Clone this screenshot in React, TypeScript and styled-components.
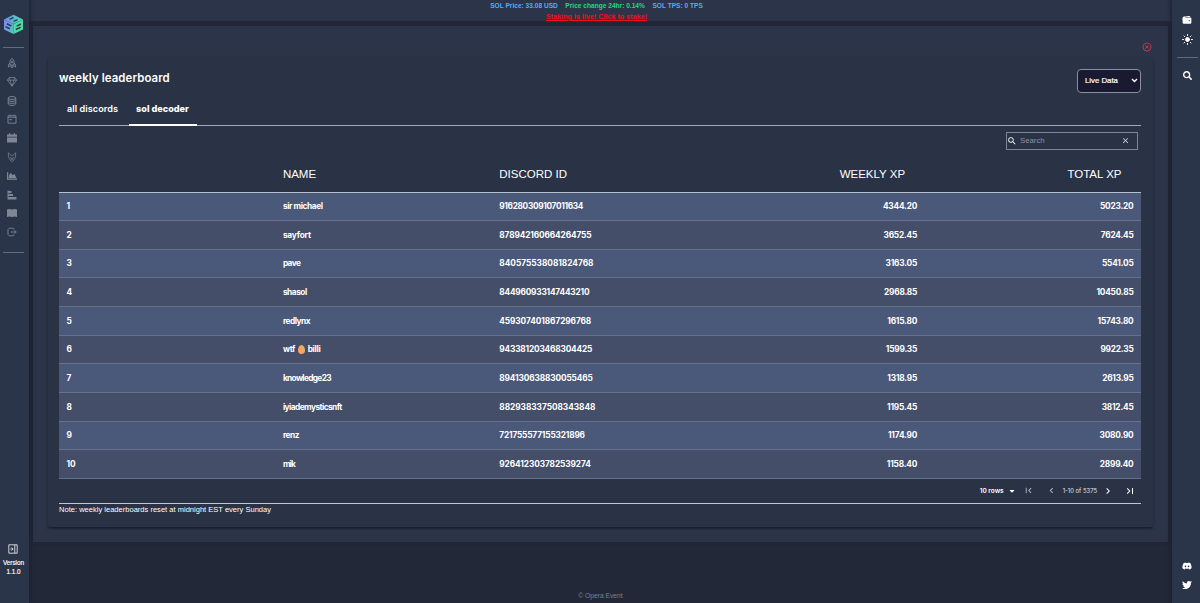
import React from "react";
import styled, { createGlobalStyle } from "styled-components";
import { IoWallet } from "react-icons/io5";
import { BsGem } from "react-icons/bs";
import { FaSearch, FaDiscord, FaTwitter, FaCaretDown, FaChartArea } from "react-icons/fa";
import { MdFirstPage, MdChevronLeft, MdChevronRight, MdLastPage, MdClose, MdSearch } from "react-icons/md";
import { AiOutlineCloseCircle } from "react-icons/ai";

const Global = createGlobalStyle`
  * { box-sizing: border-box; }
  body { margin: 0; background: #222838; color: #fff; font-family: "Liberation Sans", Arial, sans-serif; overflow: hidden; }
`;

const Page = styled.div`
  display: grid;
  grid-template-columns: 29px 1fr 28px;
  height: 603px;
`;

const Rail = styled.nav<{ $side: "left" | "right" }>`
  display: flex;
  flex-direction: column;
  align-items: center;
  background: #2b3549;
  z-index: 1;
  padding: ${(p) => (p.$side === "left" ? "14px 2px 27px 0" : "15px 0 13px 2px")};
  box-shadow: 0 0 4px 1px #191f30;
`;

const Rule = styled.hr<{ $top: number; $bottom: number }>`
  width: 21px;
  height: 1px;
  border: 0;
  background: #626b7e;
  flex: none;
  margin: ${(p) => p.$top}px 0 ${(p) => p.$bottom}px;
`;

const RailIcons = styled.div<{ $gap: number; $color: string; $shift?: number }>`
  display: flex;
  flex-direction: column;
  align-items: center;
  gap: ${(p) => p.$gap}px;
  margin-right: ${(p) => p.$shift ?? 0}px;
  color: ${(p) => p.$color};
  svg { display: block; }
`;

const Spacer = styled.div`
  flex: 1;
`;

const Version = styled.div`
  margin-top: 4px;
  font-size: 6.3px;
  line-height: 9px;
  text-align: center;
  width: 27px;
  -webkit-text-stroke: 0.15px #fff;
`;

const Main = styled.main`
  display: flex;
  flex-direction: column;
  min-width: 0;
`;

const Banner = styled.header`
  height: 21px;
  background: #2b3448;
  font-size: 6.6px;
  font-weight: 700;
  line-height: 11px;
  text-align: center;
  padding-right: 8px;
`;

const Ticker = styled.div`
  display: flex;
  justify-content: center;
  gap: 7.5px;
  color: #45b4f2;
`;

const Up = styled.span`
  color: #27d878;
`;

const Stake = styled.a`
  display: block;
  color: #f0101c;
  text-decoration: underline;
  font-size: 7.2px;
`;

const Content = styled.section`
  margin: 5px 4px 0;
  height: 516px;
  background: #2b3448;
  padding: 16px 15px 0;
  box-shadow: 0 0 3px #1d2333;
`;

const CloseRow = styled.div`
  display: flex;
  justify-content: flex-end;
  height: 16px;
  padding-right: 1px;
  color: #f0394f;
`;

const Card = styled.div`
  height: 469px;
  padding: 11px 12px 0 11px;
  background: #2a3246;
  border-radius: 2px;
  box-shadow: 0 2px 2px -1px #171c2b, 0 1px 3px rgba(20, 25, 40, 0.5);
`;

const TitleRow = styled.div`
  display: flex;
  justify-content: space-between;
  height: 30px;
`;

const Title = styled.h1`
  margin: 0;
  padding-top: 2px;
  font: 600 11.4px/14px Inter, sans-serif;
  letter-spacing: 0.1px;
`;

const Select = styled.button`
  width: 64px;
  height: 24px;
  display: flex;
  align-items: center;
  justify-content: space-between;
  padding: 0 2px 1px 7px;
  background: #1a1932;
  border: 1px solid #8791a3;
  border-radius: 4px;
  color: #fff;
  font: 7.8px "Liberation Sans", sans-serif;
  -webkit-text-stroke: 0.2px #fff;
`;

const Tabs = styled.div`
  display: flex;
  height: 27px;
  border-bottom: 1px solid #a0a9b8;
`;

const Tab = styled.div<{ $active?: boolean; $width: number }>`
  width: ${(p) => p.$width}px;
  height: 27px;
  padding-right: ${(p) => (p.$active ? 1 : 3)}px;
  text-align: center;
  font: ${(p) => (p.$active ? 800 : 600)} 9.1px/20px Inter, sans-serif;
  letter-spacing: ${(p) => (p.$active ? 0 : 0.07)}px;
  border-bottom: 2px solid ${(p) => (p.$active ? "#fff" : "transparent")};
`;

const Toolbar = styled.div`
  display: flex;
  justify-content: flex-end;
  padding: 6px 3px 0 0;
  height: 29px;
`;

const Search = styled.label`
  display: flex;
  align-items: center;
  width: 132px;
  height: 18px;
  border: 1px solid #7d8696;
  padding: 0 7px 1px 0;
  font-size: 7.8px;
  color: #8b93a2;
  svg:last-child { margin-left: auto; }
  span { margin-left: 3px; }
`;

const Table = styled.table`
  width: 100%;
  table-layout: fixed;
  border-collapse: collapse;
`;

const HeadCell = styled.th<{ $right?: boolean }>`
  height: 37px;
  padding: 1px ${(p) => (p.$right ? 19.5 : 8)}px 0 7.5px;
  border-bottom: 1px solid #b6bfce;
  text-align: ${(p) => (p.$right ? "right" : "left")};
  font: 11.5px "Liberation Sans", sans-serif;
`;

const Row = styled.tr`
  height: 28.65px;
  background: #444e69;
  &:nth-child(odd) { background: #4a587a; }
`;

const Cell = styled.td<{ $right?: boolean; $track?: number }>`
  padding: 0 7.5px 0.4px;
  border-bottom: 1px solid #667088;
  text-align: ${(p) => (p.$right ? "right" : "left")};
  font: 700 8.3px/12px Inter, sans-serif;
  letter-spacing: ${(p) => p.$track ?? 0}px;
  white-space: nowrap;
`;

const Egg = styled.span`
  display: inline-block;
  width: 7px;
  height: 9px;
  margin: 0 3px 0 2.5px;
  vertical-align: -1.5px;
  border-radius: 50% 50% 50% 50% / 58% 58% 42% 42%;
  background: #f3a764;
`;

const Pager = styled.div`
  display: flex;
  align-items: center;
  justify-content: flex-end;
  height: 25px;
  border-bottom: 1px solid #c3c6ce;
  font: 600 6.5px Inter, sans-serif;
  padding: 0 5px 0 0;
`;

const PageSize = styled.span`
  display: flex;
  align-items: center;
  gap: 4px;
  margin-right: 7px;
`;

const Step = styled.span<{ $gap: number; $dim?: boolean }>`
  display: flex;
  margin-right: ${(p) => p.$gap}px;
  color: ${(p) => (p.$dim ? "#b4bac5" : "#fff")};
`;

const Range = styled.span`
  margin-right: 5px;
  font-weight: 400;
  font-size: 5.9px;
  color: #e2e4e9;
`;

const Note = styled.p`
  margin: 0;
  font-size: 7.5px;
  line-height: 11px;
  letter-spacing: 0.02px;
`;

const Footer = styled.footer`
  margin-top: auto;
  height: 13px;
  text-align: center;
  font-size: 6.7px;
  line-height: 11px;
  color: #7c8290;
`;

const Logo = () => (
  <svg width="21" height="21" viewBox="0 0 21 21">
    <defs>
      <linearGradient id="cubeTop" x1="0" y1="0" x2="1" y2="0">
        <stop offset="0" stopColor="#6d8ff0" />
        <stop offset="1" stopColor="#4ae0b0" />
      </linearGradient>
      <linearGradient id="cubeLeft" x1="0" y1="0" x2="1" y2="1">
        <stop offset="0" stopColor="#8f78f2" />
        <stop offset="1" stopColor="#4ccfc0" />
      </linearGradient>
    </defs>
    <path d="M10.5 .8 20 5.4 10.5 10 1 5.4Z" fill="url(#cubeTop)" />
    <path d="M1 5.6 10.5 10.2V20L1 15.4Z" fill="url(#cubeLeft)" />
    <path d="M20 5.6 10.5 10.2V20L20 15.4Z" fill="#4ade9c" />
    <path d="M6.5 5.4 10.5 3.5M14.5 5.6 10.5 7.4" fill="none" stroke="#28405c" strokeWidth="1.5" />
    <path d="M8.4 12 3.8 9.8M7 14.8 2.6 12.8M18 10l-4.4 2.1M17.6 13.2 12.8 15.5" fill="none" stroke="#28405c" strokeWidth="1.5" />
  </svg>
);

const Line = styled.svg`
  width: 10px;
  height: 10px;
  fill: none;
  stroke: currentColor;
  stroke-width: 0.9;
  stroke-linejoin: round;
`;

const Solid = styled.svg`
  width: 10px;
  height: 10px;
  fill: currentColor;
`;

const Rocket = () => (
  <Line viewBox="0 0 10 10">
    <path d="M3 7V3.4Q3.3 1.4 5 .5 6.7 1.4 7 3.4V7ZM3 5 1.4 7v2L3 7.8M7 5l1.6 2v2L7 7.8M4 7v2.3h2V7" />
    <circle cx="5" cy="4" r=".8" />
  </Line>
);

const Database = () => (
  <Line viewBox="0 0 10 10">
    <ellipse cx="5" cy="2" rx="3.8" ry="1.5" />
    <path d="M1.2 2v6Q1.8 9.5 5 9.5T8.8 8V2M1.2 4.2Q2 5.4 5 5.4T8.8 4.2M1.2 6.2Q2 7.4 5 7.4T8.8 6.2" />
  </Line>
);

const CalendarOutline = () => (
  <Line viewBox="0 0 10 10">
    <path d="M1 1.8h8v7.4H1ZM1 3.2h8M3 .5v1.3M7 .5v1.3" />
    <path d="M2.6 5h2v1.2h-2z" fill="currentColor" stroke="none" />
  </Line>
);

const Calendar = () => (
  <Solid viewBox="0 0 10 10">
    <path d="M0 1.5h2V.3h1.4v1.2h3.2V.3H8v1.2h2v2.2H0ZM0 4.5h10v5H0Z" />
  </Solid>
);

const Wolf = () => (
  <Line viewBox="0 0 10 10">
    <path d="M1.3.8 4 3.3h2L8.7.8 8.5 5 6.3 8.8 5 9.5 3.7 8.8 1.5 5ZM3.2 5 4.2 6 5 8l.8-2 1-1" strokeWidth="0.7" />
  </Line>
);

const AreaFrame = styled(FaChartArea)`
  width: 10px;
  height: 10px;
`;

const Steps = () => (
  <Solid viewBox="0 0 10 10">
    <path d="M.5.5h1v9h-1zM1.5 1h3v2h-3zM1.5 4H6v2H1.5zM1.5 7h8v2.5h-8z" />
  </Solid>
);

const Book = () => (
  <Solid viewBox="0 0 10 10">
    <path d="M0 1.5Q2.5.6 5 1.5 7.5.6 10 1.5V9Q7.5 8.2 5 9 2.5 8.2 0 9Z" />
  </Solid>
);

const Leave = () => (
  <Line viewBox="0 0 10 10">
    <path d="M7 2.6V2Q6.8 1.2 6 1.2H2.2L1 2.4v5.2l1.2 1.2H6Q6.8 8.8 7 8V7.4M3.8 5h5.4M7.6 3.4 9.2 5 7.6 6.6" />
  </Line>
);

const ExpandPanel = () => (
  <Line viewBox="0 0 10 10">
    <path d="M.8.8h8.4v8.4H.8ZM6.8.8v8.4M2.4 5h2.4M3.6 3.4 5.2 5 3.6 6.6" />
  </Line>
);

const Sun = () => (
  <svg width="11" height="11" viewBox="0 0 10 10" stroke="#fff" strokeWidth="0.9" strokeLinecap="round">
    <circle cx="5" cy="5" r="1.8" fill="#fff" />
    <path d="M5 .5v.9M5 8.6v.9M.5 5h.9M8.6 5h.9M1.8 1.8l.6.6M7.6 7.6l.6.6M1.8 8.2l.6-.6M7.6 2.4l.6-.6" />
  </svg>
);

const Chevron = () => (
  <svg width="7" height="5" viewBox="0 0 7 5" fill="none" stroke="#fff" strokeWidth="1.4">
    <path d="m1 1 2.5 2.5L6 1" />
  </svg>
);

type Player = { name: React.ReactNode; track: number; id: string; idTrack: number; weekly: string; total: string };

const players: Player[] = [
  { name: "sir michael", track: -0.4, id: "916280309107011634", idTrack: -0.33, weekly: "4344.20", total: "5023.20" },
  { name: "sayfort", track: -0.2, id: "878942160664264755", idTrack: -0.12, weekly: "3652.45", total: "7624.45" },
  { name: "pave", track: -0.6, id: "840575538081824768", idTrack: 0, weekly: "3163.05", total: "5541.05" },
  { name: "shasol", track: -0.45, id: "844960933147443210", idTrack: -0.2, weekly: "2968.85", total: "10450.85" },
  { name: "redlynx", track: -0.5, id: "459307401867296768", idTrack: -0.08, weekly: "1615.80", total: "15743.80" },
  { name: <>wtf<Egg />billi</>, track: -0.3, id: "943381203468304425", idTrack: -0.17, weekly: "1599.35", total: "9922.35" },
  { name: "knowledge23", track: -0.65, id: "894130638830055465", idTrack: -0.12, weekly: "1318.95", total: "2613.95" },
  { name: "iyiademysticsnft", track: -0.55, id: "882938337508343848", idTrack: -0.03, weekly: "1195.45", total: "3812.45" },
  { name: "renz", track: -0.45, id: "721755577155321896", idTrack: -0.17, weekly: "1174.90", total: "3080.90" },
  { name: "mik", track: -0.9, id: "926412303782539274", idTrack: -0.08, weekly: "1158.40", total: "2899.40" },
];

export default function App() {
  return (
    <Page>
      <Global />
      <Rail $side="left">
        <Logo />
        <Rule $top={12} $bottom={10} />
        <RailIcons $gap={8.8} $color="#7f8797" $shift={3}>
          <Rocket />
          <BsGem size={10} />
          <Database />
          <CalendarOutline />
          <Calendar />
          <Wolf />
          <AreaFrame />
          <Steps />
          <Book />
          <Leave />
        </RailIcons>
        <Rule $top={14.5} $bottom={0} />
        <Spacer />
        <RailIcons $gap={0} $color="#dfe2e8" $shift={1}>
          <ExpandPanel />
        </RailIcons>
        <Version>Version<br />1.1.0</Version>
      </Rail>
      <Main>
        <Banner>
          <Ticker>
            <span>SOL Price: 33.08 USD</span>
            <Up>Price change 24hr: 0.14%</Up>
            <span>SOL TPS: 0 TPS</span>
          </Ticker>
          <Stake>Staking is live! Click to stake!</Stake>
        </Banner>
        <Content>
          <CloseRow><AiOutlineCloseCircle size={10} /></CloseRow>
          <Card>
            <TitleRow>
              <Title>weekly leaderboard</Title>
              <Select>Live Data<Chevron /></Select>
            </TitleRow>
            <Tabs>
              <Tab $width={70}>all discords</Tab>
              <Tab $width={68} $active>sol decoder</Tab>
            </Tabs>
            <Toolbar>
              <Search>
                <MdSearch size={10} color="#fff" />
                <span>Search</span>
                <MdClose size={9} color="#d5d9e0" />
              </Search>
            </Toolbar>
            <Table>
              <thead>
                <tr>
                  <HeadCell />
                  <HeadCell>NAME</HeadCell>
                  <HeadCell>DISCORD ID</HeadCell>
                  <HeadCell $right>WEEKLY XP</HeadCell>
                  <HeadCell $right>TOTAL XP</HeadCell>
                </tr>
              </thead>
              <tbody>
                {players.map((p, i) => (
                  <Row key={p.id}>
                    <Cell>{i + 1}</Cell>
                    <Cell $track={p.track}>{p.name}</Cell>
                    <Cell $track={p.idTrack}>{p.id}</Cell>
                    <Cell $right $track={-0.2}>{p.weekly}</Cell>
                    <Cell $right $track={-0.2}>{p.total}</Cell>
                  </Row>
                ))}
              </tbody>
            </Table>
            <Pager>
              <PageSize>10 rows<FaCaretDown size={8} /></PageSize>
              <Step $gap={12} $dim><MdFirstPage size={11} /></Step>
              <Step $gap={6} $dim><MdChevronLeft size={11} /></Step>
              <Range>1-10 of 5375</Range>
              <Step $gap={10}><MdChevronRight size={12} /></Step>
              <Step $gap={0}><MdLastPage size={12} /></Step>
            </Pager>
            <Note>Note: weekly leaderboards reset at midnight EST every Sunday</Note>
          </Card>
        </Content>
        <Footer>© Opera Event</Footer>
      </Main>
      <Rail $side="right">
        <RailIcons $gap={9} $color="#fff">
          <IoWallet size={10} />
          <Sun />
        </RailIcons>
        <Rule $top={12} $bottom={13} />
        <RailIcons $gap={0} $color="#fff"><FaSearch size={9} /></RailIcons>
        <Spacer />
        <RailIcons $gap={9} $color="#fff">
          <FaDiscord size={10} />
          <FaTwitter size={10} />
        </RailIcons>
      </Rail>
    </Page>
  );
}
